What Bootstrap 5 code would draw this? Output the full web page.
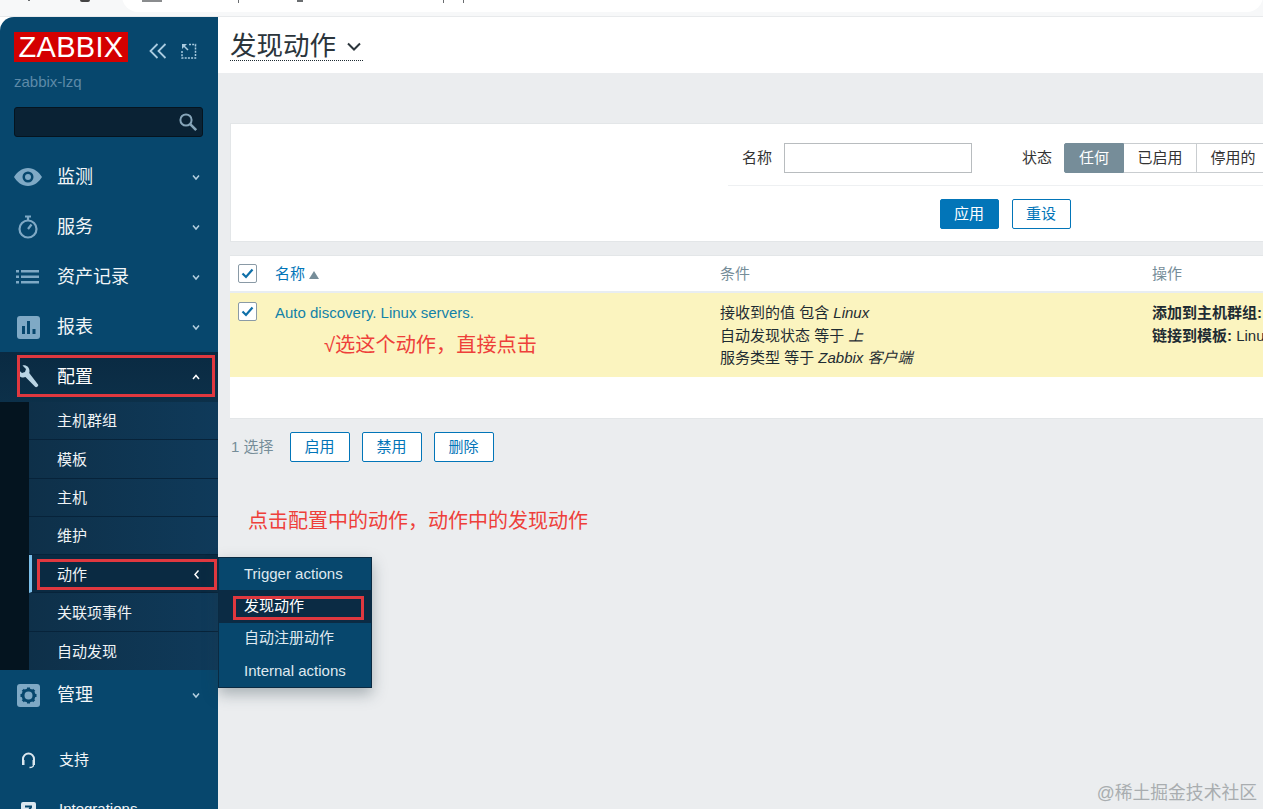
<!DOCTYPE html>
<html lang="zh"><head><meta charset="utf-8"><title>发现动作</title>
<link href="https://cdn.jsdelivr.net/npm/bootstrap@5.3.0/dist/css/bootstrap.min.css" rel="stylesheet">
<style>
html,body{height:100%}
body{margin:0;width:1263px;height:809px;overflow:hidden;background:#fff;font-family:"Liberation Sans","Noto Sans CJK SC",sans-serif;font-size:15px;color:#1f2c33}
.chrome{height:17px;background:#f7f8f9;border-bottom:1px solid #e8eaec;position:relative;overflow:hidden}
.urlpill{position:absolute;left:122px;top:-20px;width:1141px;height:32px;background:#fff;border-radius:16px}
.bit{position:absolute;top:0;background:#6a6d70}
.bit1{left:28px;width:2px;height:1px}.bit2{left:80px;width:10px;height:2px;border-radius:0 0 5px 5px;background:#444}
.bit3{left:142px;width:20px;height:2px;background:#8a8c8e}.bit4{left:238px;width:1px;height:3px}
.bit5{left:297px;width:6px;height:2px}.bit6{left:443px;width:1px;height:3px}.bit7{left:463px;width:1px;height:3px}
.shell{height:792px;background:#fff;position:relative;overflow:hidden}
.side{width:218px;flex:none;height:792px;background:#07476d;border-top-left-radius:14px;color:#fff;position:relative;overflow:hidden}
.logo{width:114px;height:30px;background:#d40000;color:#fff;font-size:29px;line-height:31px;text-align:center;letter-spacing:.3px}
.brandrow{padding:15px 0 0 14px}
.ctl{margin-left:21px;margin-top:7px;gap:14px}
.host{color:#5d8aa8;font-size:15px;line-height:16px;padding:12px 0 0 14px}
.search{margin:17px 15px 0 14px;height:30px;background:#0a2234;border:1px solid #05141f;border-radius:3px;display:flex;justify-content:flex-end;align-items:center;padding-right:4px}
.mrow{height:50px;display:flex;align-items:center;font-size:18px;color:#f2f6f8;position:relative}
.mrow .mi{width:57px;flex:none;display:flex;justify-content:center;padding-right:1px}
.mrow .tx{flex:1}
.mrow .car{width:44px;flex:none;display:flex;justify-content:center}
.menu{margin-top:15px}
.mrow.open{background:linear-gradient(#0a2a42,#0c3049);color:#fff}
.sub{display:flex;background:#0f3655}
.subrail{width:29px;flex:none;background:#04141f}
.sublist{flex:1}
.sitem{height:38.3px;display:flex;align-items:center;padding-left:28px;padding-top:2px;font-size:15px;color:#f0f4f6;border-bottom:1px solid #07233a;background:linear-gradient(90deg,#0e3049,#0f3a5a);position:relative}
.sitem:last-child{border-bottom:0}
.sitem.act{background:#0a2a42;border-left:3px solid #7cc0ea;padding-left:25px}
.sitem .car2{position:absolute;right:18px;top:14px}
.mrow.sm{font-size:15px;height:45px}
.mrow.sm .tx{margin-left:2px}
.sup{margin-top:18px}
.sup+.mrow.sm{margin-top:4px}
.main{flex:1;background:#ebedef;height:792px;min-width:0;position:relative;overflow:hidden}
.head{height:56px;background:#fff;padding:11px 0 0 12px}
.htitle{display:inline-flex;align-items:center;font-size:26.5px;line-height:29px;height:33px;padding-top:4px;color:#2b353b;border-bottom:1px dotted #1f2c33;padding-right:2px;gap:11px}
.fbox{margin:50px 0 0 12px;width:1550px;height:119px;background:#fff;border:1px solid #e3e6e8;position:relative}
.frow{display:flex;align-items:center;height:62px;margin-left:497px;border-bottom:1px solid #eef0f2;white-space:nowrap;padding-top:7px}
.flabel{font-size:15px;color:#333;width:30px;flex:none;margin-left:14px}
.flabel2{margin-left:50px}
.finp{width:188px;height:30px;border:1px solid #b8bcbf;background:#fff;margin-left:12px;flex:none}
.seg{display:flex;height:30px;margin-left:12px;flex:none}
.seg span{display:flex;align-items:center;justify-content:center;border:1px solid #c9cdd0;border-left:0;font-size:15px;color:#333;width:73px;flex:none}
.seg span.on{background:#768d99;color:#fff;width:60px;border:1px solid #768d99;border-radius:2px 0 0 2px}
.fact{display:flex;justify-content:center;gap:13px;padding-top:13px}
.zb{width:59px;height:30px;padding:0;font-size:15px;border-radius:2px;line-height:28px;border:1px solid #0275b8;background:#fff;color:#0275b8}
.zb.pri{background:#0275b8;color:#fff}
.tbox{margin:13px 0 0 12px;height:164px;background:#fff;border-top:1px solid #e3e6e8;border-bottom:1px solid #e3e6e8;position:relative}
.trow{display:flex}
.thead{height:37px;align-items:center;border-bottom:2px solid #e8edf2;font-size:15px;color:#768d99}
.thead .c2,.thead .c3,.thead .c4{padding-top:2px}
.tbody{height:84px;background:#fbf4bf;font-size:15px;line-height:22.5px;color:#1f2c33}
.c1{width:45px;flex:none;padding-left:8px}
.c2{width:445px;flex:none}
.c3{width:432px;flex:none}
.c4{flex:1;white-space:nowrap;overflow:hidden}
.tbody>div{padding-top:9px}
.cl{height:22.5px;white-space:nowrap}
.cb{width:19px;height:19px;border:1px solid #8a9aa6;border-radius:2px;background:#fff;display:flex;align-items:center;justify-content:center}
.lnk{color:#0275b8;text-decoration:none}
.tbody .lnk{color:#1282a8}
.foot{display:flex;align-items:center;gap:12px;margin:13px 0 0 13px;color:#768d99;font-size:15px}
.foot .zb{width:60px}
.foot .zb.f{margin-left:4px}
.note{position:absolute;color:#ee3f3a;font-size:20px;white-space:nowrap;line-height:24px}
.n1{left:324px;top:316px;font-size:20.2px}
.n2{left:248px;top:492px}
.flyout{position:absolute;left:218px;top:540px;width:154px;height:131px;background:#07476d;border:1px solid #0a2a42;box-shadow:0 6px 14px rgba(40,60,70,.35);color:#dfe9ef;font-size:15px;z-index:3}
.flyout div{height:32.3px;display:flex;align-items:center;padding-left:25px}
.flyout div.act{background:#0b2b44;color:#fff}
.rbox{position:absolute;border:3px solid #e0383f;z-index:5}
.r1{left:17px;top:338px;width:198px;height:42px}
.r2{left:37px;top:542px;width:180px;height:31px}
.r3{left:233px;top:579px;width:131px;height:24px}
.wm{position:absolute;right:6px;bottom:2px;color:#a9adb0;font-size:17.8px;z-index:4}
</style></head>
<body>
<div class="chrome"><div class="urlpill"></div><i class="bit bit1"></i><i class="bit bit2"></i><i class="bit bit3"></i><i class="bit bit4"></i><i class="bit bit5"></i><i class="bit bit6"></i><i class="bit bit7"></i></div>
<div class="shell d-flex">
 <aside class="side">
  <div class="brandrow d-flex">
   <div class="logo">ZABBIX</div>
   <div class="ctl d-flex align-items-center">
    <svg width="18" height="16" viewBox="0 0 18 16" fill="none" stroke="#a9cbe0" stroke-width="1.800"><path d="M8.500 1 1.500 8l7 7M16.500 1l-7 7 7 7"/></svg>
    <svg width="16" height="16" viewBox="0 0 16 16" fill="none" stroke="#a9cbe0" stroke-width="1.500"><path d="M8 1.500h6.500V15H1V8" stroke-dasharray="2 1.200"/><path d="M1.500 1.500 7 7"/><path d="M1 6V1h5z" fill="#a9cbe0" stroke="none"/></svg>
   </div>
  </div>
  <div class="host">zabbix-lzq</div>
  <div class="search"><svg width="20" height="20" viewBox="0 0 20 20" fill="none" stroke="#86a5b9" stroke-width="2"><circle cx="8" cy="8" r="5.600"/><path d="m12.200 12.200 6 6" stroke-width="2.600"/></svg></div>
  <div class="menu">
   <div class="mrow"><div class="mi"><svg width="28" height="18" viewBox="0 0 28 18"><path fill-rule="evenodd" fill="#7fa9c5" d="M14 0c6 0 11 4 14 9-3 5-8 9-14 9S3 14 0 9c3-5 8-9 14-9zm0 3.500a5.500 5.500 0 1 0 0 11 5.500 5.500 0 0 0 0-11z"/><circle cx="14" cy="9" r="3" fill="#7fa9c5"/></svg></div><div class="tx">监测</div><div class="car"><svg width="10" height="7" viewBox="0 0 10 7" fill="none" stroke="#b4cfdf" stroke-width="1.500"><path d="m2 1.500 3 3.500 3-3.500"/></svg></div></div>
   <div class="mrow"><div class="mi"><svg width="20" height="24" viewBox="0 0 20 24" fill="none" stroke="#7fa9c5" stroke-width="2.200"><circle cx="10" cy="14" r="8.500"/><path d="M7 1.500h6M10 2v3M10 14l3.500-4.500"/></svg></div><div class="tx">服务</div><div class="car"><svg width="10" height="7" viewBox="0 0 10 7" fill="none" stroke="#b4cfdf" stroke-width="1.500"><path d="m2 1.500 3 3.500 3-3.500"/></svg></div></div>
   <div class="mrow"><div class="mi"><svg width="24" height="14" viewBox="0 0 24 14" fill="#7fa9c5"><path d="M0 0h3v2.500H0zM5 0h18v2.500H5zM0 5.500h3V8H0zM5 5.500h18V8H5zM0 11h3v2.500H0zM5 11h18v2.500H5z"/></svg></div><div class="tx">资产记录</div><div class="car"><svg width="10" height="7" viewBox="0 0 10 7" fill="none" stroke="#b4cfdf" stroke-width="1.500"><path d="m2 1.500 3 3.500 3-3.500"/></svg></div></div>
   <div class="mrow"><div class="mi"><svg width="23" height="23" viewBox="0 0 23 23"><rect width="23" height="23" rx="3" fill="#7fa9c5"/><path d="M5 10h3v8H5zM10 5h3v13h-3zM15.500 13h3v5h-3z" fill="#07476d"/></svg></div><div class="tx">报表</div><div class="car"><svg width="10" height="7" viewBox="0 0 10 7" fill="none" stroke="#b4cfdf" stroke-width="1.500"><path d="m2 1.500 3 3.500 3-3.500"/></svg></div></div>
   <div class="mrow open"><div class="mi"><svg width="22" height="24" viewBox="0 0 22 24" fill="#b9d4e4"><path d="M1 4.500 5 8l3-1 1-3L5.500.5C9-.5 12.500 2 12.500 6c0 .7-.1 1.300-.3 1.900l8.800 11.600c1 1.400-1.600 3.600-2.900 2.300L8.500 12c-.8.300-1.500.4-2.300.4C2 12.400-.6 8.500 1 4.500z"/></svg></div><div class="tx">配置</div><div class="car"><svg width="10" height="7" viewBox="0 0 10 7" fill="none" stroke="#fff" stroke-width="1.500"><path d="m2 5 3-3.500L8 5"/></svg></div></div>
   <div class="sub"><div class="subrail"></div><div class="sublist">
    <div class="sitem">主机群组</div><div class="sitem">模板</div><div class="sitem">主机</div><div class="sitem">维护</div>
    <div class="sitem act">动作<svg class="car2" width="7" height="11" viewBox="0 0 7 11" fill="none" stroke="#fff" stroke-width="1.500"><path d="M5.500 1.500 2 5.500l3.500 4"/></svg></div>
    <div class="sitem">关联项事件</div><div class="sitem">自动发现</div>
   </div></div>
   <div class="mrow"><div class="mi"><svg width="23" height="23" viewBox="0 0 23 23"><rect width="23" height="23" rx="3" fill="#7fa9c5"/><circle cx="11.500" cy="11.500" r="5.500" fill="none" stroke="#07476d" stroke-width="3"/><path d="M11.500 3.500v3M11.500 16.500v3M3.500 11.500h3M16.500 11.500h3M5.800 5.800l2.200 2.200M15 15l2.200 2.200M17.200 5.800 15 8M8 15l-2.200 2.200" stroke="#07476d" stroke-width="3"/></svg></div><div class="tx">管理</div><div class="car"><svg width="10" height="7" viewBox="0 0 10 7" fill="none" stroke="#b4cfdf" stroke-width="1.500"><path d="m2 1.500 3 3.500 3-3.500"/></svg></div></div>
   <div class="mrow sm sup"><div class="mi"><svg width="15" height="17" viewBox="0 0 15 17" fill="none" stroke="#dbe7ef" stroke-width="2"><path d="M2 10V7a5.500 5.500 0 0 1 11 0v3"/><rect x="1" y="8" width="2.500" height="5" fill="#dbe7ef" stroke="none"/><rect x="11.500" y="8" width="2.500" height="5" fill="#dbe7ef" stroke="none"/><path d="M12.500 13c0 2-2 2.500-4 2.500" stroke-width="1.300"/></svg></div><div class="tx">支持</div></div>
   <div class="mrow sm"><div class="mi"><svg width="15" height="15" viewBox="0 0 15 15"><rect width="15" height="15" rx="2" fill="#dbe7ef"/><path d="M4 3.500h7v2L7 11.500H4.500L8.500 5.500H4z" fill="#07476d"/></svg></div><div class="tx">Integrations</div></div>
  </div>
 </aside>
 <main class="main">
  <div class="head"><span class="htitle">发现动作<svg width="14" height="9" viewBox="0 0 14 9" fill="none" stroke="#2b353b" stroke-width="2"><path d="m1 1.500 6 6 6-6"/></svg></span></div>
  <div class="fbox">
   <div class="frow">
    <span class="flabel">名称</span><div class="finp"></div>
    <span class="flabel flabel2">状态</span>
    <div class="seg"><span class="on">任何</span><span>已启用</span><span>停用的</span></div>
   </div>
   <div class="fact"><button class="btn zb pri">应用</button><button class="btn zb">重设</button></div>
  </div>
  <div class="tbox">
   <div class="trow thead"><div class="c1"><div class="cb"><svg width="13" height="11" viewBox="0 0 13 11" fill="none" stroke="#0e6fa8" stroke-width="2.200"><path d="m1.500 5.500 3.500 3.500 6.500-7.500"/></svg></div></div><div class="c2"><a class="lnk" href="#">名称</a> <svg width="10" height="8" viewBox="0 0 10 8" fill="#768d99"><path d="M5 0l5 8H0z"/></svg></div><div class="c3">条件</div><div class="c4">操作</div></div>
   <div class="trow tbody"><div class="c1"><div class="cb"><svg width="13" height="11" viewBox="0 0 13 11" fill="none" stroke="#0e6fa8" stroke-width="2.200"><path d="m1.500 5.500 3.500 3.500 6.500-7.500"/></svg></div></div><div class="c2"><a class="lnk" href="#">Auto discovery. Linux servers.</a></div><div class="c3"><div class="cl">接收到的值 包含 <i>Linux</i></div><div class="cl">自动发现状态 等于 <i>上</i></div><div class="cl">服务类型 等于 <i>Zabbix 客户端</i></div></div><div class="c4"><div class="cl"><b>添加到主机群组:</b> Linux servers</div><div class="cl"><b>链接到模板:</b> Linux</div></div></div>
  </div>
  <div class="foot"><span>1 选择</span><button class="btn zb f">启用</button><button class="btn zb">禁用</button><button class="btn zb">删除</button></div>
 </main>
 <div class="flyout"><div>Trigger actions</div><div class="act">发现动作</div><div>自动注册动作</div><div>Internal actions</div></div>
 <div class="note n1">√选这个动作，直接点击</div>
 <div class="note n2">点击配置中的动作，动作中的发现动作</div>
 <div class="rbox r1"></div>
 <div class="rbox r2"></div>
 <div class="rbox r3"></div>
</div>
<div class="wm">@稀土掘金技术社区</div>
</body></html>
